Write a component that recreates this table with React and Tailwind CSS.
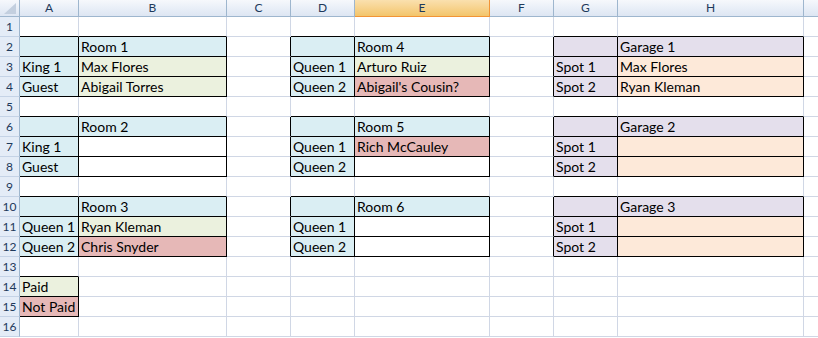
const COLS = ["A", "B", "C", "D", "E", "F", "G", "H", "I"];
const ROW_COUNT = 16;

const FILL = {
  blue: "bg-[#daeef3]",
  green: "bg-[#ebf1de]",
  pink: "bg-[#e6b8b7]",
  lilac: "bg-[#e4dfec]",
  peach: "bg-[#fde9d9]",
  white: "bg-white",
};

// cell ref -> { fill, text }; every listed cell gets a thin black border
const cells = {};
const put = (ref, fill, text = "") => {
  cells[ref] = { fill, text };
};

// one two-column block: header row, then two label/value rows
const block = (labelCol, valueCol, top, headFill, title, rows) => {
  put(`${labelCol}${top}`, headFill);
  put(`${valueCol}${top}`, headFill, title);
  rows.forEach(([label, value, fill], i) => {
    put(`${labelCol}${top + 1 + i}`, headFill, label);
    put(`${valueCol}${top + 1 + i}`, fill, value);
  });
};

block("A", "B", 2, "blue", "Room 1", [
  ["King 1", "Max Flores", "green"],
  ["Guest", "Abigail Torres", "green"],
]);
block("A", "B", 6, "blue", "Room 2", [
  ["King 1", "", "white"],
  ["Guest", "", "white"],
]);
block("A", "B", 10, "blue", "Room 3", [
  ["Queen 1", "Ryan Kleman", "green"],
  ["Queen 2", "Chris Snyder", "pink"],
]);
block("D", "E", 2, "blue", "Room 4", [
  ["Queen 1", "Arturo Ruiz", "green"],
  ["Queen 2", "Abigail's Cousin?", "pink"],
]);
block("D", "E", 6, "blue", "Room 5", [
  ["Queen 1", "Rich McCauley", "pink"],
  ["Queen 2", "", "white"],
]);
block("D", "E", 10, "blue", "Room 6", [
  ["Queen 1", "", "white"],
  ["Queen 2", "", "white"],
]);
block("G", "H", 2, "lilac", "Garage 1", [
  ["Spot 1", "Max Flores", "peach"],
  ["Spot 2", "Ryan Kleman", "peach"],
]);
block("G", "H", 6, "lilac", "Garage 2", [
  ["Spot 1", "", "peach"],
  ["Spot 2", "", "peach"],
]);
block("G", "H", 10, "lilac", "Garage 3", [
  ["Spot 1", "", "peach"],
  ["Spot 2", "", "peach"],
]);

// legend
put("A14", "green", "Paid");
put("A15", "pink", "Not Paid");

const has = (c, r) => c >= 0 && c < COLS.length && !!cells[`${COLS[c]}${r}`];

const Corner = () => (
  <div className="h-[17px] border-r border-b border-r-[#9eb6ce] border-b-[#9eb6ce] bg-gradient-to-b from-[#f6f8fc] to-[#dde6f3]">
    <svg width="19" height="16" viewBox="0 0 19 16">
      <polygon points="4,14 16,14 16,3" fill="#c3cfdf" />
    </svg>
  </div>
);

const ColHeader = ({ name }) => {
  const active = name === "E";
  return (
    <div
      className={
        active
          ? "h-[17px] flex items-center justify-center border-r border-b border-r-[#f29436] border-b-[#f29436] bg-gradient-to-b from-[#fae0ae] to-[#f3c56a] text-[12px] leading-none text-[#1e395b]"
          : "h-[17px] flex items-center justify-center border-r border-b border-r-[#9eb6ce] border-b-[#9eb6ce] bg-gradient-to-b from-[#f6f8fc] to-[#dde6f3] text-[12px] leading-none text-[#1e395b]"
      }
    >
      {name}
    </div>
  );
};

const RowHeader = ({ n }) => (
  <div className="h-[20px] flex items-center justify-center border-r border-b border-r-[#9eb6ce] border-b-[#c5d3e6] bg-[#e4ecf7] text-[12px] leading-none text-[#1e395b]">
    {n}
  </div>
);

const Cell = ({ c, r }) => {
  const cell = cells[`${COLS[c]}${r}`];
  const right = has(c, r) || has(c + 1, r) ? "border-r-black" : "border-r-[#d0d7e5]";
  const bottom = has(c, r) || has(c, r + 1) ? "border-b-black" : "border-b-[#d0d7e5]";
  const fill = cell ? FILL[cell.fill] : "bg-white";
  return (
    <div
      className={`h-[20px] border-r border-b ${right} ${bottom} ${fill} pl-[2px] whitespace-nowrap text-[14px] leading-[19px] text-black`}
    >
      {cell?.text}
    </div>
  );
};

export default function App() {
  const rows = Array.from({ length: ROW_COUNT }, (_, i) => i + 1);
  return (
    <div className="h-[338px] w-full overflow-hidden bg-white font-['Lato',_'Liberation_Sans',_sans-serif]">
      <div className="grid w-max grid-cols-[20px_59px_148px_64px_64px_135px_64px_64px_186px_64px]">
        <Corner />
        {COLS.map((name) => (
          <ColHeader key={name} name={name === "I" ? "" : name} />
        ))}
        {rows.map((r) => [
          <RowHeader key={`h${r}`} n={r} />,
          ...COLS.map((_, c) => <Cell key={`${c}-${r}`} c={c} r={r} />),
        ])}
      </div>
    </div>
  );
}
